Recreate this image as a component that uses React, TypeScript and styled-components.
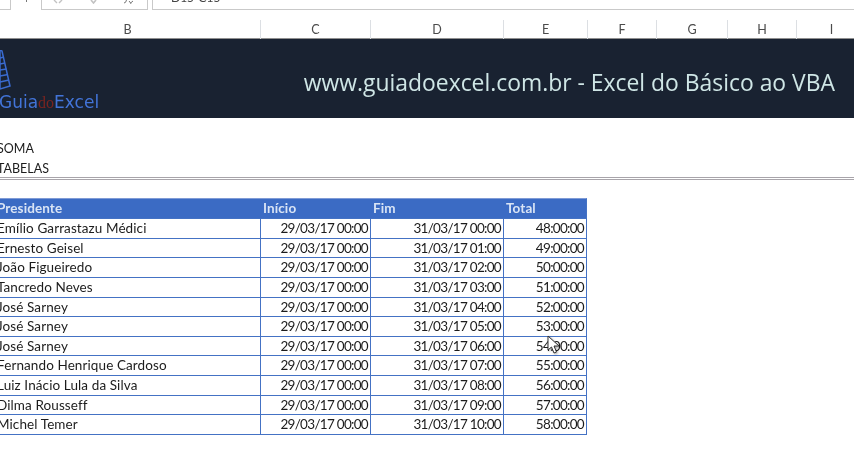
import React from 'react';
import styled, { createGlobalStyle } from 'styled-components';

const GlobalStyle = createGlobalStyle`
  html, body {
    margin: 0;
    padding: 0;
    background: #fff;
    overflow: hidden;
  }
`;

const Page = styled.div`
  width: 854px;
  height: 464px;
  overflow: hidden;
  font-family: Lato, "Open Sans", sans-serif;
  color: #1c1c1c;
  filter: blur(0.3px);
`;

const Toolbar = styled.div`
  height: 10px;
  display: flex;
  gap: 4px;
  overflow: hidden;
`;

const NameBox = styled.div`
  width: 11px;
  height: 10px;
  flex: none;
  border: solid #c9c9c9;
  border-width: 0 1px 1px 0;
  box-sizing: border-box;
`;

const Dropdown = styled.div`
  width: 22px;
  flex: none;
  display: flex;
  justify-content: center;
  box-sizing: border-box;
`;

const Tick = styled.span`
  display: block;
  width: 1px;
  height: 2px;
  background: #777;
`;

const ActionBox = styled.div`
  width: 107px;
  height: 10px;
  flex: none;
  border: solid #c9c9c9;
  border-width: 0 1px 1px 1px;
  box-sizing: border-box;
  display: grid;
  grid-template-columns: 11px 10px 27px 7px 26px 12px;
  color: #c2c2c2;
  overflow: hidden;
`;

const Glyph = styled.svg<{ $col: number }>`
  display: block;
  grid-column: ${p => p.$col};
`;

const FormulaBox = styled.div`
  flex: 1;
  height: 10px;
  border: solid #c9c9c9;
  border-width: 0 0 1px 1px;
  box-sizing: border-box;
  padding-left: 18px;
  font-size: 12px;
  line-height: 13px;
  overflow: hidden;
`;

const CutText = styled.div`
  margin-top: -9px;
  color: #444;
`;

const ColumnHeaders = styled.div`
  display: grid;
  grid-template-columns: 266px 110px 133px 84px 69px 71px 69px 70px;
  margin-left: -5px;
  height: 29px;
  padding-top: 10px;
  box-sizing: border-box;
  border-bottom: 1px solid #8f8f8f;
  width: 872px;
`;

const ColumnLabel = styled.div`
  border-right: 1px solid #dcdfe3;
  text-align: center;
  font-size: 12.5px;
  line-height: 19px;
  color: #4b4b4b;
`;

const Banner = styled.div`
  height: 79px;
  background: #192231;
  display: flex;
  justify-content: space-between;
  padding-right: 19px;
  box-sizing: border-box;
`;

const Logo = styled.div`
  width: 110px;
  flex: none;
`;

const LogoMark = styled.svg`
  display: block;
  margin-top: 11px;
  margin-left: -4px;
`;

const LogoText = styled.div`
  margin-top: 2px;
  margin-left: -1px;
  font-family: "DejaVu Sans", sans-serif;
  font-size: 17px;
  line-height: 20px;
  color: #4274d8;
  white-space: nowrap;
`;

const LogoDo = styled.span`
  font-family: "Liberation Serif", serif;
  font-size: 16px;
  color: #7a2420;
`;

const Slogan = styled.div`
  font-family: "Open Sans", sans-serif;
  font-size: 22.9px;
  line-height: 88px;
  color: #cfe6e6;
  white-space: nowrap;
`;

const Titles = styled.div`
  padding-top: 19px;
  font-size: 12.5px;
  border-bottom: 3px double #a8a4aa;
  margin-bottom: 18px;
`;

const TitleLine = styled.div`
  height: 20px;
  line-height: 24px;
  margin-left: -3px;
`;

const Sheet = styled.div`
  width: 587px;
  position: relative;
  border-right: 1px solid #4472c4;
  border-top: 1px solid #7f9bd6;
  box-sizing: border-box;
`;

const Row = styled.div<{ $head?: boolean }>`
  display: grid;
  grid-template-columns: 260px 110px 133px 83px;
  height: ${p => (p.$head ? '20px' : '19.64px')};
  box-sizing: border-box;
  border-bottom: 1px solid #4472c4;
  background: ${p => (p.$head ? '#3b6bc4' : '#fff')};
  color: ${p => (p.$head ? '#d9e4f5' : '#1c1c1c')};
  font-weight: ${p => (p.$head ? 700 : 400)};
  font-size: 13.5px;
  line-height: 19px;
`;

const NameCell = styled.div`
  margin-left: -3px;
  white-space: nowrap;
  letter-spacing: 0.1px;
`;

const HeadCell = styled.div`
  padding-left: 3px;
  letter-spacing: 0.1px;
`;

const ValueCell = styled.div`
  border-left: 1px solid #4472c4;
  text-align: right;
  padding-right: 2px;
  white-space: nowrap;
  letter-spacing: -0.7px;
`;

const Pointer = styled.svg`
  position: absolute;
  left: 547px;
  top: 136px;
  filter: drop-shadow(1px 1px 1px rgba(0, 0, 0, 0.35));
`;

const labels = ['B', 'C', 'D', 'E', 'F', 'G', 'H', 'I'];

const presidents = [
  'Emílio Garrastazu Médici',
  'Ernesto Geisel',
  'João Figueiredo',
  'Tancredo Neves',
  'José Sarney',
  'José Sarney',
  'José Sarney',
  'Fernando Henrique Cardoso',
  'Luiz Inácio Lula da Silva',
  'Dilma Rousseff',
  'Michel Temer',
];

const pad = (n: number) => String(n).padStart(2, '0');

const App: React.FC = () => (
  <Page>
    <GlobalStyle />
    <Toolbar>
      <NameBox />
      <Dropdown>
        <Tick />
      </Dropdown>
      <ActionBox>
        <Glyph $col={2} width="10" height="4" viewBox="0 0 10 4" fill="none" stroke="#c2c2c2" strokeWidth="1.4">
          <path d="M1 0 L4 3 M9 0 L6 3" />
        </Glyph>
        <Glyph $col={4} width="7" height="4" viewBox="0 0 7 4" fill="none" stroke="#c2c2c2" strokeWidth="1.6">
          <path d="M1 0 L3.5 3 L6 0" />
        </Glyph>
        <Glyph $col={6} width="12" height="4" viewBox="0 0 12 4" fill="none" stroke="#777" strokeWidth="1">
          <path d="M1 3 Q3 3 3.5 0 M6 1 L8 3.5 M10 1 L7 3.5" />
        </Glyph>
      </ActionBox>
      <FormulaBox>
        <CutText>D15-C15</CutText>
      </FormulaBox>
    </Toolbar>
    <ColumnHeaders>
      {labels.map(l => (
        <ColumnLabel key={l}>{l}</ColumnLabel>
      ))}
    </ColumnHeaders>
    <Banner>
      <Logo>
        <LogoMark width="16" height="40" viewBox="0 0 16 40" fill="none" stroke="#3a6bd0" strokeWidth="1.5">
          <path d="M4 0 L4 39 L14 36 L6 1 Z" />
          <path d="M4 8 L8 7 M4 14 L9 13 M4 20 L10.5 19 M4 26 L12 24.5 M4 32 L13 30" />
        </LogoMark>
        <LogoText>
          Guia<LogoDo>do</LogoDo>Excel
        </LogoText>
      </Logo>
      <Slogan>www.guiadoexcel.com.br - Excel do Básico ao VBA</Slogan>
    </Banner>
    <Titles>
      <TitleLine>SOMA</TitleLine>
      <TitleLine>TABELAS</TitleLine>
    </Titles>
    <Sheet>
      <Row $head>
        <NameCell>Presidente</NameCell>
        <HeadCell>Início</HeadCell>
        <HeadCell>Fim</HeadCell>
        <HeadCell>Total</HeadCell>
      </Row>
      {presidents.map((name, i) => (
        <Row key={i}>
          <NameCell>{name}</NameCell>
          <ValueCell>29/03/17 00:00</ValueCell>
          <ValueCell>31/03/17 {pad(i)}:00</ValueCell>
          <ValueCell>{48 + i}:00:00</ValueCell>
        </Row>
      ))}
      <Pointer width="14" height="20" viewBox="0 0 14 20">
        <path d="M1 1 L1 15 L4.5 12 L7 18 L9.5 17 L7 11 L12 11 Z" fill="#fff" stroke="#333" strokeWidth="1" />
      </Pointer>
    </Sheet>
  </Page>
);

export default App;
